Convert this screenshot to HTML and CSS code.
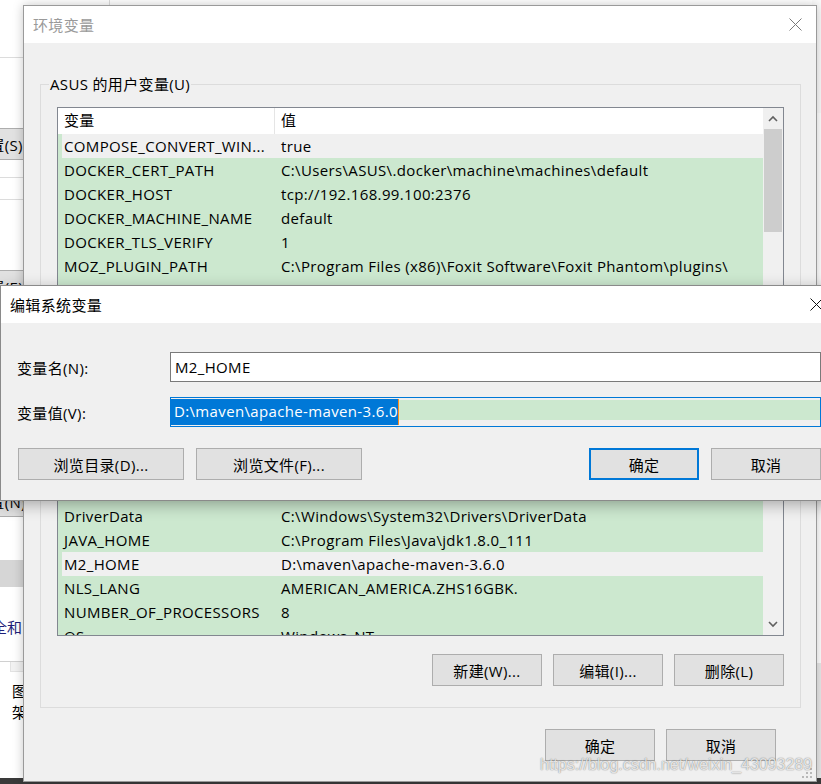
FILE: index.html
```html
<!DOCTYPE html>
<html lang="zh-CN">
<head>
<meta charset="utf-8">
<title>环境变量</title>
<link rel="stylesheet" href="styles.css">
</head>
<body>
<div class="desktop">
  <div class="taskbar"></div>
  <div class="bgwin">
    <div class="bg-head"></div>
    <div class="bg-gap g70"></div>
    <div class="bg-btn"><span class="bg-btn-text">设置(S)...</span></div>
    <div class="bg-line h18"></div>
    <div class="bg-line h22"></div>
    <div class="bg-gap g70"></div>
    <div class="bg-btn"><span class="bg-btn-text">设置(E)...</span></div>
    <div class="bg-gap g183"></div>
    <div class="bg-btn"><span class="bg-btn-text">设置(N)...</span></div>
    <div class="bg-gap g43"></div>
    <div class="bg-block"></div>
    <div class="bg-gap g28"></div>
    <div class="bg-link">安全和</div>
    <div class="bg-gap g22"></div>
    <div class="bg-panel">
      <div class="bg-tab"></div>
      <div class="bg-text">图<br>架</div>
    </div>
  </div>
  <div class="bg-right"></div>

  <div class="win env">
    <div class="titlebar">
      <span class="title">环境变量</span>
      <svg class="close" width="13" height="13" viewBox="0 0 13 13"><path d="M0.5 0.5 L12.5 12.5 M12.5 0.5 L0.5 12.5" stroke="#7a7a7a" stroke-width="1" fill="none"/></svg>
    </div>
    <div class="env-body">
      <div class="group">
        <div class="group-label">ASUS 的用户变量(U)</div>
        <div class="list">
          <div class="list-main">
            <div class="list-head">
              <div class="c1 hc">变量</div>
              <div class="c2">值</div>
            </div>
            <div class="row hl"><div class="c1">COMPOSE_CONVERT_WIN...</div><div class="c2">true</div></div>
            <div class="row"><div class="c1">DOCKER_CERT_PATH</div><div class="c2">C:\Users\ASUS\.docker\machine\machines\default</div></div>
            <div class="row"><div class="c1">DOCKER_HOST</div><div class="c2">tcp://192.168.99.100:2376</div></div>
            <div class="row"><div class="c1">DOCKER_MACHINE_NAME</div><div class="c2">default</div></div>
            <div class="row"><div class="c1">DOCKER_TLS_VERIFY</div><div class="c2">1</div></div>
            <div class="row"><div class="c1">MOZ_PLUGIN_PATH</div><div class="c2">C:\Program Files (x86)\Foxit Software\Foxit Phantom\plugins\</div></div>
            <div class="row"><div class="c1">NO_PROXY</div><div class="c2">192.168.99.100</div></div>
            <div class="rows-hidden"></div>
            <div class="row"><div class="c1"></div><div class="c2"></div></div>
            <div class="row"><div class="c1">DriverData</div><div class="c2">C:\Windows\System32\Drivers\DriverData</div></div>
            <div class="row"><div class="c1">JAVA_HOME</div><div class="c2">C:\Program Files\Java\jdk1.8.0_111</div></div>
            <div class="row hl"><div class="c1">M2_HOME</div><div class="c2">D:\maven\apache-maven-3.6.0</div></div>
            <div class="row"><div class="c1">NLS_LANG</div><div class="c2">AMERICAN_AMERICA.ZHS16GBK.</div></div>
            <div class="row"><div class="c1">NUMBER_OF_PROCESSORS</div><div class="c2">8</div></div>
            <div class="row"><div class="c1">OS</div><div class="c2">Windows_NT</div></div>
          </div>
          <div class="vscroll">
            <div class="arrow">
              <svg width="10" height="7" viewBox="0 0 10 7"><path d="M1 6 L5 2 L9 6" stroke="#606060" stroke-width="1.6" fill="none"/></svg>
            </div>
            <div class="thumb"></div>
            <div class="track"></div>
            <div class="arrow">
              <svg width="10" height="7" viewBox="0 0 10 7"><path d="M1 1 L5 5 L9 1" stroke="#606060" stroke-width="1.6" fill="none"/></svg>
            </div>
          </div>
        </div>
        <div class="btn-row">
          <div class="btn">新建(W)...</div>
          <div class="btn">编辑(I)...</div>
          <div class="btn">删除(L)</div>
        </div>
      </div>
      <div class="btn-row dlg-btns">
        <div class="btn">确定</div>
        <div class="btn">取消</div>
      </div>
    </div>
    <svg class="grip" width="11" height="11" viewBox="0 0 11 11">
      <rect x="8" y="0" width="2" height="2" fill="#b8b8b8"/>
      <rect x="4" y="4" width="2" height="2" fill="#b8b8b8"/>
      <rect x="8" y="4" width="2" height="2" fill="#b8b8b8"/>
      <rect x="0" y="8" width="2" height="2" fill="#b8b8b8"/>
      <rect x="4" y="8" width="2" height="2" fill="#b8b8b8"/>
      <rect x="8" y="8" width="2" height="2" fill="#b8b8b8"/>
    </svg>
  </div>

  <div class="win edit">
    <div class="titlebar">
      <span class="title">编辑系统变量</span>
      <svg class="close" width="13" height="13" viewBox="0 0 13 13"><path d="M0.5 0.5 L12.5 12.5 M12.5 0.5 L0.5 12.5" stroke="#111" stroke-width="1" fill="none"/></svg>
    </div>
    <div class="edit-body">
      <div class="form">
        <label class="lbl">变量名(N):</label>
        <div class="input">M2_HOME</div>
        <label class="lbl">变量值(V):</label>
        <div class="input focus"><span class="line"><span class="sel">D:\maven\apache-maven-3.6.0</span></span></div>
      </div>
      <div class="edit-btns">
        <div class="btn-group">
          <div class="btn wide">浏览目录(D)...</div>
          <div class="btn wide">浏览文件(F)...</div>
        </div>
        <div class="btn-group">
          <div class="btn default">确定</div>
          <div class="btn">取消</div>
        </div>
      </div>
    </div>
  </div>

  <div class="watermark">https://blog.csdn.net/weixin_43093289</div>
</div>
</body>
</html>
```

FILE: styles.css
```css
* { box-sizing: border-box; }

body {
  margin: 0;
  font-family: "Open Sans", "Noto Sans CJK SC", sans-serif;
  font-size: 15px;
  letter-spacing: 0.35px;
  color: #000;
}

.desktop {
  position: relative;
  width: 821px;
  height: 784px;
  overflow: hidden;
  background: #fff;
}

.taskbar {
  position: absolute;
  left: 0;
  right: 0;
  bottom: 0;
  height: 6px;
  background: #3a3a3a;
}

/* background window on the left */
.bgwin {
  position: absolute;
  left: 0;
  top: 0;
  width: 110px;
  height: 778px;
  background: #fff;
  display: flex;
  flex-direction: column;
  border-right: 1px solid #ddd;
}

.bg-right {
  position: absolute;
  left: 812px;
  top: 0;
  width: 9px;
  height: 778px;
  background: #fff;
  border-top: 113px solid #fafafa;
  border-bottom: 115px solid #e9e9e9;
}

.bg-head { height: 58px; border-bottom: 1px solid #dcdcdc; flex: none; }
.bg-gap { flex: none; }
.g70 { height: 70px; }
.g183 { height: 183px; }
.g43 { height: 43px; }
.g28 { height: 28px; }
.g22 { height: 22px; }

.bg-btn {
  flex: none;
  height: 32px;
  background: #e1e1e1;
  border: 1px solid #adadad;
  border-left: none;
  display: flex;
  align-items: center;
  overflow: hidden;
  white-space: nowrap;
}
.bg-btn-text { margin-left: -26px; }

.bg-line { flex: none; border-bottom: 1px solid #dcdcdc; }
.h18 { height: 18px; }
.h22 { height: 22px; }

.bg-block { flex: none; height: 27px; background: #d6d6d6; }

.bg-link {
  flex: none;
  height: 24px;
  line-height: 24px;
  color: #1f1f7a;
  white-space: nowrap;
  margin-left: -23px;
  letter-spacing: 0;
}

.bg-panel {
  flex: 1;
  border-top: 1px solid #d0d0d0;
  background: #fff;
  padding: 8px 0 0 12px;
}
.bg-tab {
  height: 10px;
  width: 60px;
  margin-left: -2px;
  margin-top: -8px;
  background: #f2f2f2;
  border: 1px solid #e2e2e2;
  border-top: none;
}
.bg-text { margin-top: 9px; line-height: 21px; white-space: nowrap; }

/* windows */
.win {
  position: absolute;
  background: #f0f0f0;
  display: flex;
  flex-direction: column;
}

.titlebar {
  flex: none;
  height: 37px;
  background: #fff;
  display: flex;
  align-items: center;
  justify-content: space-between;
}

.close { display: block; }

/* environment variables dialog */
.env {
  left: 23px;
  top: 5px;
  width: 794px;
  height: 777px;
  border: 1px solid #9a9a9a;
  box-shadow: 0 0 10px rgba(0, 0, 0, 0.22);
}
.env .titlebar { padding: 0 14px 0 9px; }
.env .title { color: #9a9a9a; }

.env-body {
  flex: 1;
  padding: 41px 15px 0 16px;
  display: flex;
  flex-direction: column;
}

.group {
  border: 1px solid #dcdcdc;
  padding: 0 16px 21px 16px;
}

.group-label {
  width: max-content;
  margin: -11px 0 0 -8px;
  padding: 0 1px;
  line-height: 20px;
  background: #f0f0f0;
}

.list {
  margin-top: 13px;
  height: 529px;
  border: 1px solid #828790;
  display: flex;
  background: #cce8cf;
}

.list-main {
  flex: 1;
  overflow: hidden;
  display: flex;
  flex-direction: column;
}

.list-head {
  flex: none;
  height: 26px;
  line-height: 25px;
  background: #fff;
  display: flex;
}

.c1 {
  flex: none;
  width: 217px;
  padding-left: 6px;
  overflow: hidden;
  white-space: nowrap;
}
.c2 {
  flex: 1;
  padding-left: 6px;
  white-space: nowrap;
  overflow: hidden;
}
.hc { border-right: 1px solid #e5e5e5; }

.row {
  flex: none;
  height: 24px;
  line-height: 24px;
  background: #cce8cf;
  display: flex;
}
.row.hl { background: linear-gradient(to right, #cce8cf 4px, #f0f0f0 4px); }

.rows-hidden { flex: none; height: 178px; background: #cce8cf; }

.vscroll {
  flex: none;
  width: 20px;
  background: #f0f0f0;
  display: flex;
  flex-direction: column;
}
.arrow {
  flex: none;
  height: 21px;
  display: flex;
  align-items: center;
  justify-content: center;
}
.thumb {
  flex: none;
  height: 103px;
  margin: 0 1px;
  background: #cdcdcd;
}
.track { flex: 1; }

.btn-row {
  display: flex;
  justify-content: flex-end;
  gap: 11px;
  margin-top: 18px;
}

.btn {
  width: 110px;
  height: 32px;
  background: #e1e1e1;
  border: 1px solid #adadad;
  display: flex;
  align-items: center;
  justify-content: center;
  white-space: nowrap;
}

.dlg-btns {
  margin-top: 21px;
  padding-right: 25px;
}

.grip {
  position: absolute;
  right: 3px;
  bottom: 2px;
}

/* edit system variable dialog */
.edit {
  left: 0;
  top: 285px;
  width: 840px;
  height: 216px;
  border: 1px solid #8a8a8a;
  box-shadow: 0 4px 14px rgba(0, 0, 0, 0.3);
}
.edit .titlebar { padding: 0 16px 0 9px; }

.edit-body {
  flex: 1;
  padding: 29px 18px 0 16px;
}

.form {
  display: grid;
  grid-template-columns: 153px 1fr;
  row-gap: 15px;
  align-items: center;
}

.lbl { white-space: nowrap; }

.input {
  height: 30px;
  border: 1px solid #7a7a7a;
  background: #fff;
  padding-left: 4px;
  line-height: 28px;
  white-space: nowrap;
}

.input.focus {
  border-color: #0078d7;
  background: #f0f0f0;
  padding: 2px 0 0 0;
  line-height: normal;
}
.input.focus .line {
  display: block;
  height: 20px;
  background: #cce8cf;
}
.sel {
  display: inline-block;
  height: 26px;
  line-height: 24px;
  margin-top: -1px;
  padding: 0 0 0 3px;
  background: #0078d7;
  color: #fff;
  border-right: 1px solid #ff8c1a;
}

.edit-btns {
  display: flex;
  justify-content: space-between;
  margin-top: 21px;
  padding-left: 1px;
}
.btn-group { display: flex; gap: 12px; }
.btn.wide { width: 166px; }
.btn.default { border: 2px solid #0078d7; }

.watermark {
  position: absolute;
  left: 540px;
  top: 755px;
  font-family: "Liberation Sans", Arial, sans-serif;
  font-size: 16px;
  line-height: 20px;
  letter-spacing: 0;
  color: rgba(255, 255, 255, 0.8);
  text-shadow: 0 0 1px rgba(0, 0, 0, 0.45), 0 0 2px rgba(0, 0, 0, 0.2);
  white-space: nowrap;
}
```
